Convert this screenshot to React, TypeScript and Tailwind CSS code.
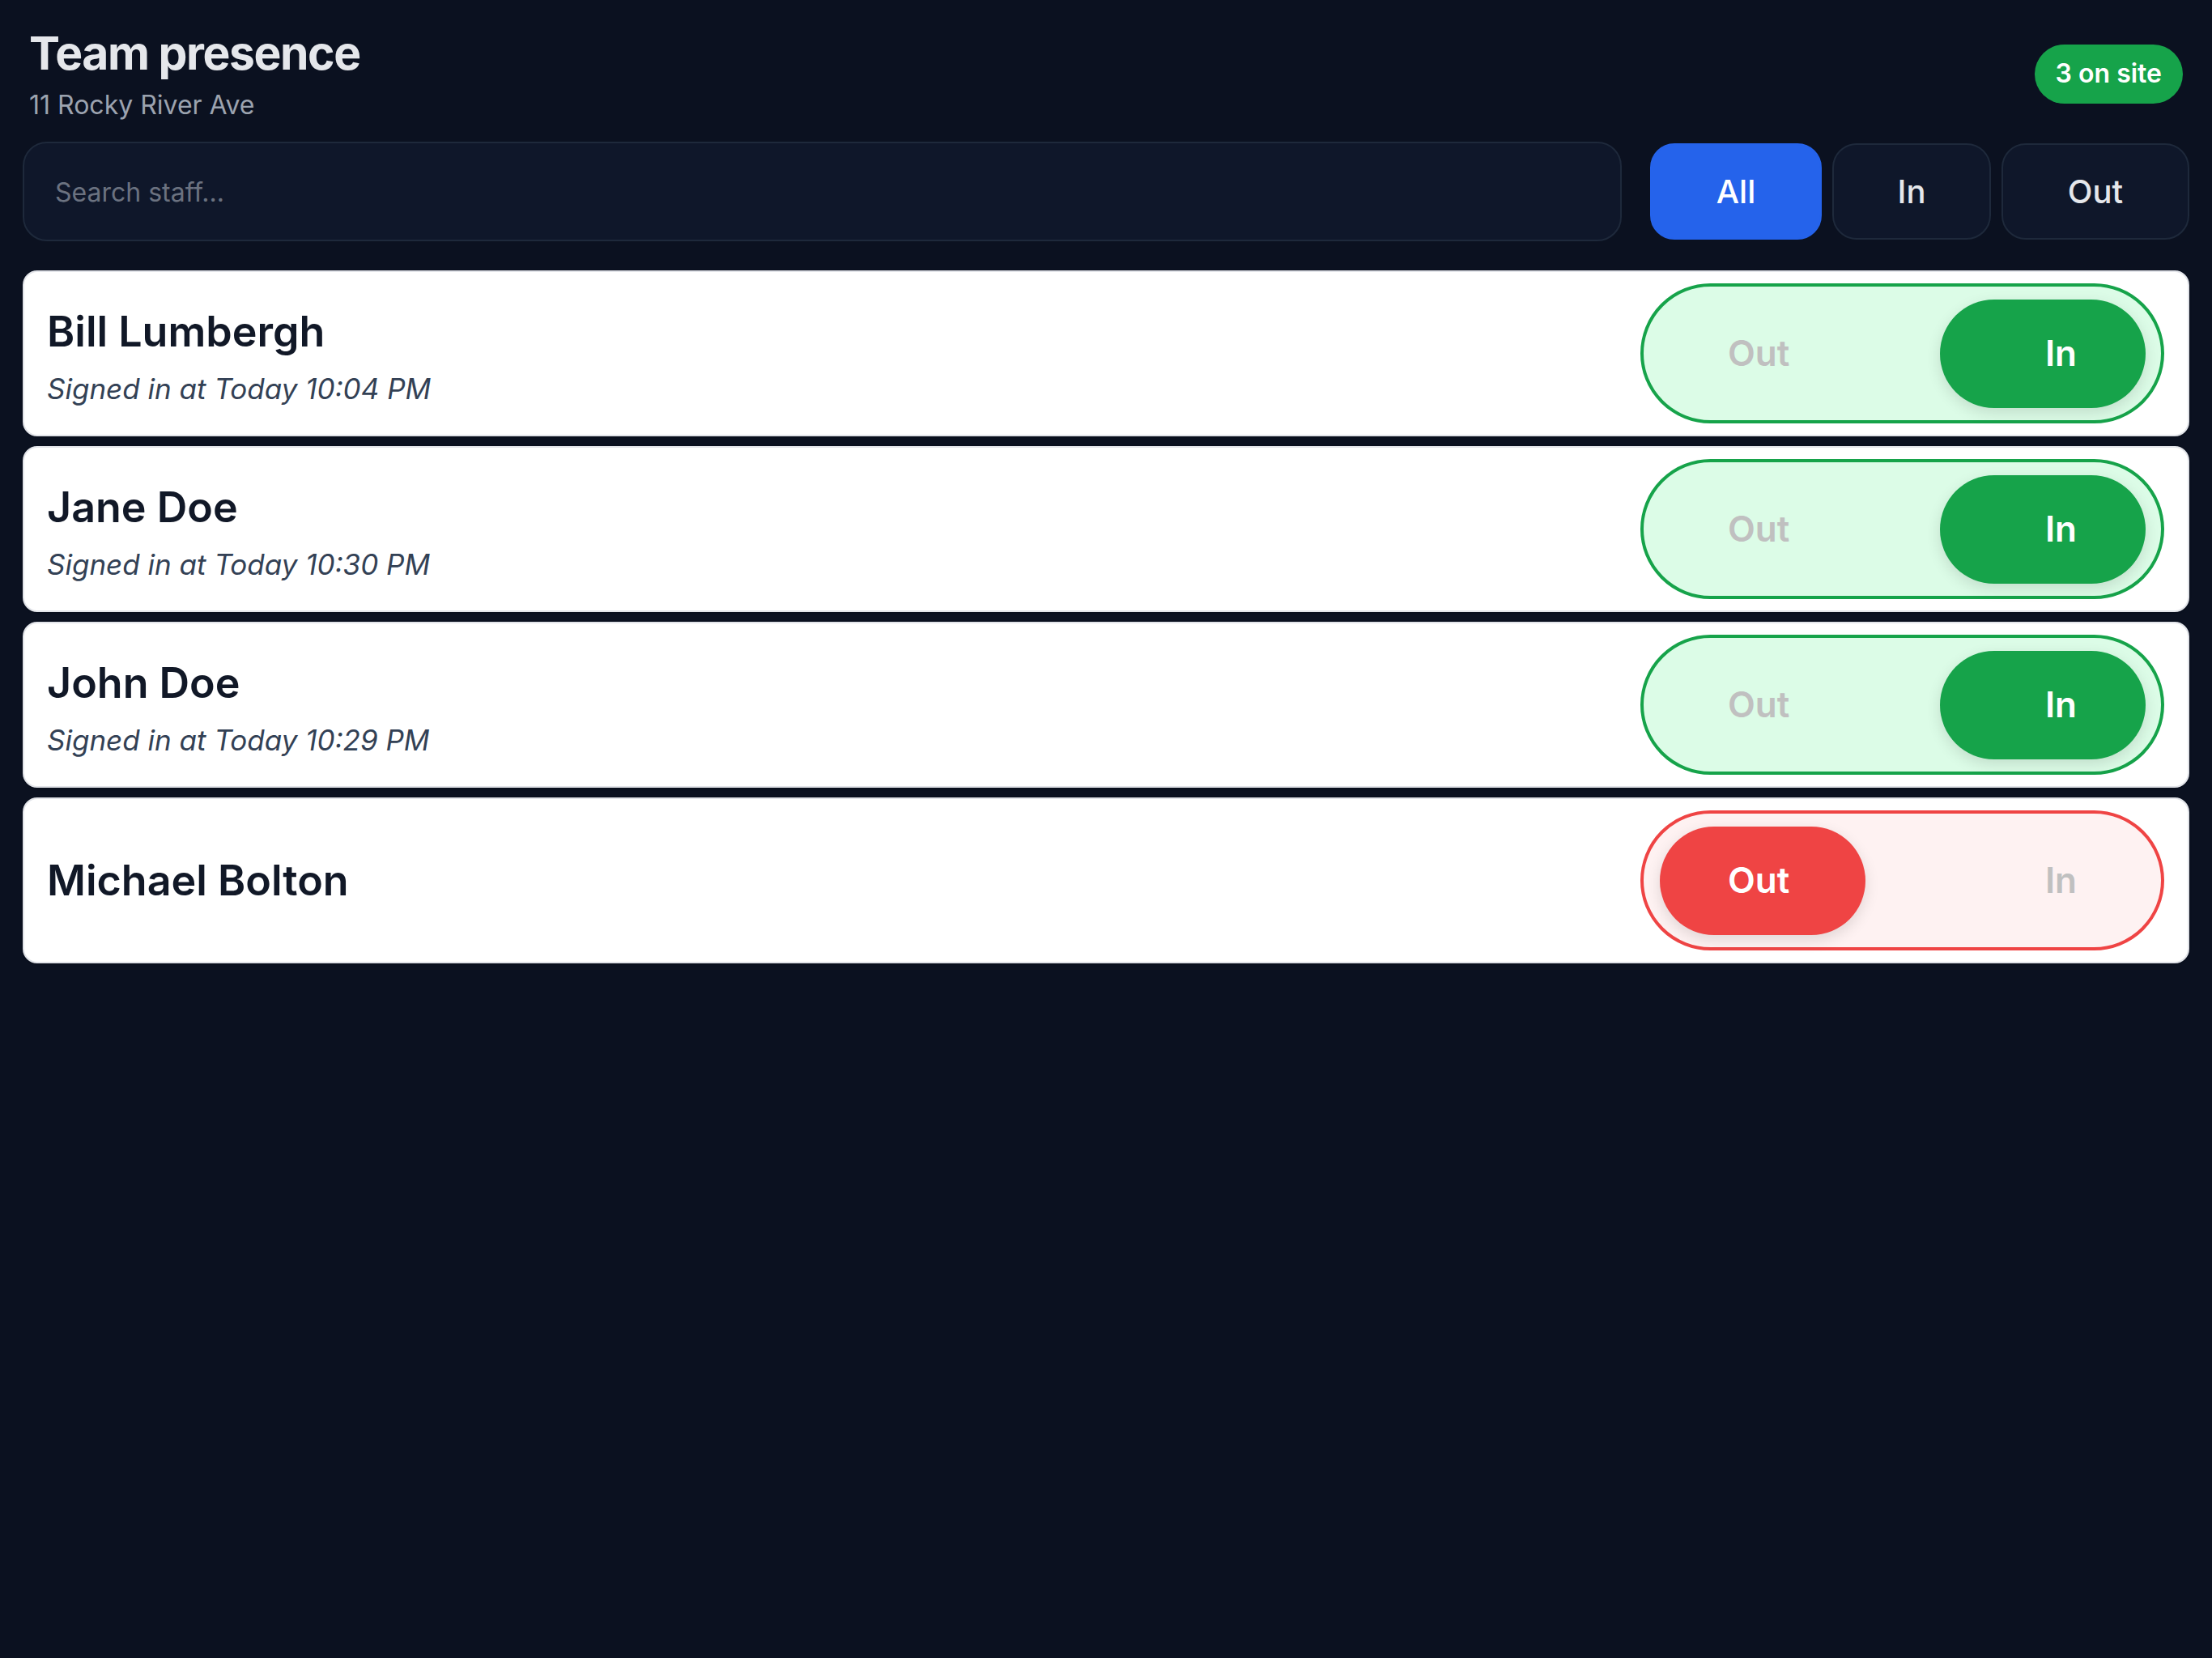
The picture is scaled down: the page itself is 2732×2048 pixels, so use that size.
import { useState } from 'react';

type Status = 'in' | 'out';

interface Staff {
  id: number;
  name: string;
  status: Status;
  signedInAt?: string;
}

const STAFF: Staff[] = [
  { id: 1, name: 'Bill Lumbergh', status: 'in', signedInAt: 'Today 10:04 PM' },
  { id: 2, name: 'Jane Doe', status: 'in', signedInAt: 'Today 10:30 PM' },
  { id: 3, name: 'John Doe', status: 'in', signedInAt: 'Today 10:29 PM' },
  { id: 4, name: 'Michael Bolton', status: 'out' },
];

type Filter = 'all' | 'in' | 'out';

// Big pill switch: the knob slides under the two labels.
function PresenceToggle({ status, onChange }: { status: Status; onChange: (s: Status) => void }) {
  const isIn = status === 'in';
  return (
    <button
      type="button"
      onClick={() => onChange(isIn ? 'out' : 'in')}
      className={
        isIn
          ? 'relative h-[173px] w-[647px] shrink-0 rounded-full border-4 border-[#16a34a] bg-[#dcfce7]'
          : 'relative h-[173px] w-[647px] shrink-0 rounded-full border-4 border-[#ef4444] bg-[#fef2f2]'
      }
    >
      <span
        className={
          isIn
            ? 'absolute right-[19px] top-[16px] h-[134px] w-[254px] rounded-full bg-[#16a34a] shadow-[0_6px_18px_rgba(0,0,0,0.12)]'
            : 'absolute left-[20px] top-[16px] h-[134px] w-[254px] rounded-full bg-[#ef4444] shadow-[0_6px_18px_rgba(0,0,0,0.12)]'
        }
      />
      <span className="relative z-10 flex h-full items-center justify-between px-[104px] text-[44px] font-semibold leading-[53px]">
        <span className={isIn ? 'text-[#c0c0c0]' : 'text-white'}>Out</span>
        <span className={isIn ? 'text-white' : 'text-[#c0c0c0]'}>In</span>
      </span>
    </button>
  );
}

export default function App() {
  const [staff, setStaff] = useState<Staff[]>(STAFF);
  const [filter, setFilter] = useState<Filter>('all');
  const [query, setQuery] = useState('');

  const onSite = staff.filter((s) => s.status === 'in').length;

  const visible = staff.filter((s) => {
    if (filter !== 'all' && s.status !== filter) return false;
    return s.name.toLowerCase().includes(query.trim().toLowerCase());
  });

  const setStatus = (id: number, status: Status) => {
    setStaff((prev) => prev.map((s) => (s.id === id ? { ...s, status } : s)));
  };

  const filterButton = (key: Filter, label: string, width: string) => (
    <button
      key={key}
      type="button"
      onClick={() => setFilter(key)}
      className={
        filter === key
          ? `h-[119px] ${width} rounded-[30px] border-2 border-[#2563eb] bg-[#2563eb] text-[40px] font-medium text-white`
          : `h-[119px] ${width} rounded-[30px] border-2 border-[#1e293b] bg-[#0f172a] text-[40px] font-medium text-[#e5e7eb]`
      }
    >
      {label}
    </button>
  );

  return (
    <div className="min-h-screen bg-[#0b1120] px-[28px] pt-[34px] font-['Inter',sans-serif]">
      {/* Header */}
      <div className="flex items-center justify-between px-[8px]">
        <div>
          <h1 className="text-[57px] font-bold leading-[64px] tracking-tight text-[#e5e7eb]">Team presence</h1>
          <p className="mt-[12px] text-[32px] leading-[40px] text-[#9ca3af]">11 Rocky River Ave</p>
        </div>
        <span className="-mt-[2px] flex h-[73px] items-center rounded-full bg-[#16a34a] px-[26px] text-[32px] font-semibold text-white">
          {onSite} on site
        </span>
      </div>

      {/* Search + filters */}
      <div className="mt-[25px] flex items-center">
        <input
          value={query}
          onChange={(e) => setQuery(e.target.value)}
          placeholder="Search staff..."
          className="h-[123px] flex-1 rounded-[30px] border-2 border-[#1e293b] bg-[#0f172a] pl-[38px] pt-[2px] text-[32px] text-[#e5e7eb] outline-none placeholder:text-[#6b7280]"
        />
        <div className="ml-[35px] flex gap-[13px]">
          {filterButton('all', 'All', 'w-[212px]')}
          {filterButton('in', 'In', 'w-[196px]')}
          {filterButton('out', 'Out', 'w-[232px]')}
        </div>
      </div>

      {/* Staff list */}
      <div className="mt-[36px] flex flex-col gap-[12px]">
        {visible.map((s) => (
          <div
            key={s.id}
            className="flex items-center justify-between rounded-[18px] border-2 border-[#e2e4e9] bg-white py-[14px] pl-[28px] pr-[29px] shadow-sm"
          >
            <div className={s.status === 'in' ? 'pt-[8px]' : ''}>
              <div className="text-[52px] font-semibold leading-[60px] text-[#111827]">{s.name}</div>
              {s.status === 'in' && s.signedInAt && (
                <div className="mt-[18px] text-[35px] italic leading-[44px] text-[#334155]">
                  Signed in at {s.signedInAt}
                </div>
              )}
            </div>
            <PresenceToggle status={s.status} onChange={(st) => setStatus(s.id, st)} />
          </div>
        ))}
      </div>
    </div>
  );
}
